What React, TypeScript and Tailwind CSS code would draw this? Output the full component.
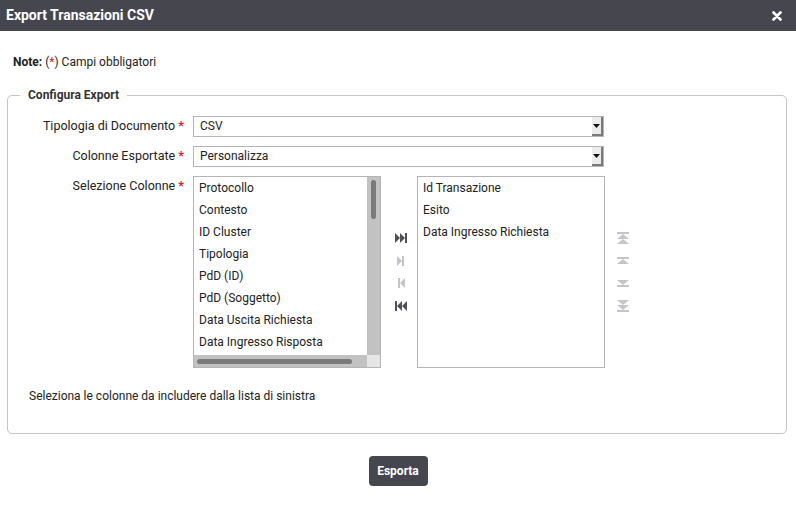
import React from 'react';

const leftItems = [
  'Protocollo',
  'Contesto',
  'ID Cluster',
  'Tipologia',
  'PdD (ID)',
  'PdD (Soggetto)',
  'Data Uscita Richiesta',
  'Data Ingresso Risposta',
];

const rightItems = ['Id Transazione', 'Esito', 'Data Ingresso Richiesta'];

const Select = ({ value }: { value: string }) => (
  <div className="flex h-[21px] w-[411px] items-stretch border border-[#b4b4b4] bg-white">
    <span className="flex-1 pl-[6px] leading-[19px] text-[#222]">{value}</span>
    <span className="flex w-[11px] items-center justify-center border-r-2 border-b-2 border-[#7a7a7a] bg-[#ececec]">
      <svg width="7" height="4" viewBox="0 0 7 4">
        <path d="M0 0h7L3.5 4z" fill="#111" />
      </svg>
    </span>
  </div>
);

// transfer arrows between the two lists
const MoveIcon = ({ dir, double, active }: { dir: 'right' | 'left'; double?: boolean; active?: boolean }) => {
  const c = active ? '#50505a' : '#c4c4cc';
  const right = (
    <>
      {double && <path d="M0 0l5 5-5 5z" />}
      <path d={double ? 'M5 0l5 5-5 5z' : 'M2 0l5 5-5 5z'} />
      <rect x={double ? 10 : 7} y="0" width="2" height="10" />
    </>
  );
  return (
    <div className="flex h-[22.7px] items-center">
      <svg width="12" height="10" viewBox="0 0 12 10" fill={c}>
        {dir === 'right' ? right : <g transform="translate(12 0) scale(-1 1)">{right}</g>}
      </svg>
    </div>
  );
};

const OrderIcon = ({ dir, double }: { dir: 'up' | 'down'; double?: boolean }) => {
  const up = (
    <>
      <rect x="0" y="0" width="12" height="2" />
      <path d="M6 2l6 5H0z" />
      {double && <path d="M6 7l6 5H0z" />}
    </>
  );
  return (
    <div className="flex h-[22.7px] items-center">
      <svg width="12" height={double ? 12 : 7} viewBox={double ? '0 0 12 12' : '0 0 12 7'} fill="#c4c4cc">
        {dir === 'up' ? up : <g transform={`translate(0 ${double ? 12 : 7}) scale(1 -1)`}>{up}</g>}
      </svg>
    </div>
  );
};

const Req = () => <span className="font-bold text-[#e02020]">*</span>;

const App: React.FC = () => {
  return (
    <div className="h-[506px] w-[796px] bg-white text-[12px] text-[#222]" style={{ fontFamily: 'Roboto, "Liberation Sans", sans-serif' }}>
      <div className="flex h-[31px] items-center justify-between bg-[#46464f] pl-[6px] pr-[14px]">
        <span className="text-[14px] font-bold text-white">Export Transazioni CSV</span>
        <svg width="10" height="10" viewBox="0 0 10 10">
          <path d="M1.5 1.5l7 7M8.5 1.5l-7 7" stroke="#fff" strokeWidth="2.6" strokeLinecap="round" />
        </svg>
      </div>

      <div className="px-[13px] pt-[23px] pb-[18px] leading-[16px]">
        <span className="font-bold">Note:</span> (<span className="text-[#e02020]">*</span>) Campi obbligatori
      </div>

      <fieldset className="ml-[7px] mr-[9px] rounded-[5px] border border-[#c4c4c4] px-3 pb-[29px]">
        <legend className="px-2 font-bold leading-[14px] text-[#333]">Configura Export</legend>

        <div className="flex flex-col gap-[9px] pt-[14px]">
          <div className="flex items-center">
            <label className="w-[164px] text-right text-[12.5px]">
              Tipologia di Documento <Req />
            </label>
            <div className="ml-[9px]">
              <Select value="CSV" />
            </div>
          </div>
          <div className="flex items-center">
            <label className="w-[164px] text-right text-[12.5px]">
              Colonne Esportate <Req />
            </label>
            <div className="ml-[9px]">
              <Select value="Personalizza" />
            </div>
          </div>
          <div className="flex items-start">
            <label className="w-[164px] pt-[1px] text-right text-[12.5px]">
              Selezione Colonne <Req />
            </label>
            <div className="ml-[9px] flex items-center">
              <div className="flex h-[192px] w-[188px] flex-col border border-[#b4b4b4] bg-white">
                <div className="flex flex-1 overflow-hidden">
                  <ul className="flex-1 overflow-hidden whitespace-nowrap">
                    {leftItems.map(item => (
                      <li key={item} className="pl-[5px] leading-[22px]">{item}</li>
                    ))}
                  </ul>
                  <div className="flex w-[13px] justify-center bg-[#c2c2c2] pt-[3px]">
                    <div className="h-[39px] w-[5px] rounded-full bg-[#7a7a7a]" />
                  </div>
                </div>
                <div className="flex h-[12px]">
                  <div className="flex flex-1 items-center bg-[#c2c2c2] pl-[3px] pr-[15px]">
                    <div className="h-[5px] w-full rounded-full bg-[#7a7a7a]" />
                  </div>
                  <div className="w-[13px] bg-[#e6e6e6]" />
                </div>
              </div>

              <div className="flex w-[36px] flex-col items-center pl-[4px]">
                <MoveIcon dir="right" double active />
                <MoveIcon dir="right" />
                <MoveIcon dir="left" />
                <MoveIcon dir="left" double active />
              </div>

              <div className="h-[192px] w-[188px] border border-[#b4b4b4] bg-white">
                <ul className="whitespace-nowrap">
                  {rightItems.map(item => (
                    <li key={item} className="pl-[5px] leading-[22px]">{item}</li>
                  ))}
                </ul>
              </div>

              <div className="flex w-[36px] flex-col items-center">
                <OrderIcon dir="up" double />
                <OrderIcon dir="up" />
                <OrderIcon dir="down" />
                <OrderIcon dir="down" double />
              </div>
            </div>
          </div>
        </div>

        <p className="pl-[9px] pt-[20px] leading-[16px]">Seleziona le colonne da includere dalla lista di sinistra</p>
      </fieldset>

      <div className="flex justify-center pt-[22px]">
        <button className="h-[30px] w-[59px] rounded-[4px] bg-[#46464f] font-bold text-white">Esporta</button>
      </div>
    </div>
  );
};

export default App;
